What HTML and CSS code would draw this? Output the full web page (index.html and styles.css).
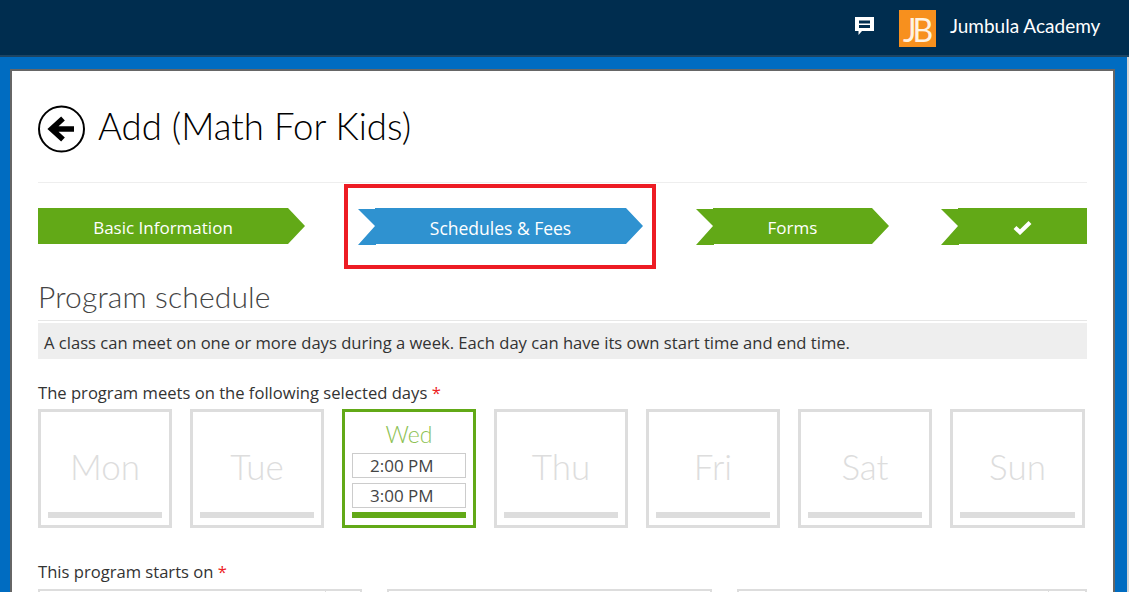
FILE: index.html
```html
<!DOCTYPE html>
<html lang="en">
<head>
<meta charset="utf-8">
<title>Add (Math For Kids)</title>
<link rel="stylesheet" href="styles.css">
</head>
<body>
<header class="topbar">
  <svg class="chat-icon" width="19" height="18" viewBox="0 0 19 18" aria-hidden="true">
    <path fill="#fff" d="M0 0H19V14H7L3.500 18V14H0Z"/>
    <path fill="#002d4f" d="M4 3.500H15V6.500H4ZM4 8H15V11H4Z"/>
  </svg>
  <div class="logo"><span class="logo-text">JB</span></div>
  <span class="org-name">Jumbula Academy</span>
</header>
<div class="stage">
  <main class="card">
    <div class="title-row">
      <svg class="back-icon" width="47" height="48" viewBox="0 0 47 48" aria-hidden="true">
        <circle cx="23.500" cy="24" r="22.500" fill="none" stroke="#000" stroke-width="2"/>
        <path fill="none" stroke="#000" stroke-width="5.500" d="M36 24H14M25 13.500L13.500 24L25 34.500"/>
      </svg>
      <h1 class="page-title">Add (Math For Kids)</h1>
    </div>
    <nav class="steps">
      <div class="step step-first step-1">Basic Information</div>
      <div class="step step-active step-2">Schedules &amp; Fees</div>
      <div class="step step-3">Forms</div>
      <div class="step step-last step-4">
        <svg width="19" height="15" viewBox="0 0 19 15" aria-hidden="true">
          <path fill="none" stroke="#fff" stroke-width="4.200" d="M2 7.500L7 12.200L17 2.500"/>
        </svg>
      </div>
      <div class="highlight"></div>
    </nav>
    <h2 class="section-title">Program schedule</h2>
    <p class="note">A class can meet on one or more days during a week. Each day can have its own start time and end time.</p>
    <label class="field-label first-label">The program meets on the following selected days <span class="req">*</span></label>
    <div class="days">
      <div class="day"><span class="day-name">Mon</span><i class="day-bar"></i></div>
      <div class="day"><span class="day-name">Tue</span><i class="day-bar"></i></div>
      <div class="day day-on">
        <span class="day-name-on">Wed</span>
        <div class="time">2:00 PM</div>
        <div class="time time-end">3:00 PM</div>
        <i class="day-bar"></i>
      </div>
      <div class="day"><span class="day-name">Thu</span><i class="day-bar"></i></div>
      <div class="day"><span class="day-name">Fri</span><i class="day-bar"></i></div>
      <div class="day"><span class="day-name">Sat</span><i class="day-bar"></i></div>
      <div class="day"><span class="day-name">Sun</span><i class="day-bar"></i></div>
    </div>
    <label class="field-label second-label">This program starts on <span class="req">*</span></label>
    <div class="inputs">
      <div class="input input-a"><i class="addon addon-a"></i></div>
      <div class="input input-b"></div>
      <div class="input input-c"><i class="addon addon-c"></i></div>
    </div>
  </main>
  <div class="scrollbar"></div>
</div>
</body>
</html>
```
FILE: styles.css
```css
* { box-sizing: border-box; }
html, body { height: 100%; }
body {
  margin: 0;
  height: 592px;
  overflow: hidden;
  display: flex;
  flex-direction: column;
  background: #006cc1;
  font-family: "Open Sans", "Noto Sans", sans-serif;
  color: #333;
}
.topbar {
  flex: none;
  height: 57px;
  background: #002d4f;
  border-bottom: 2px solid #1d4462;
  display: flex;
  align-items: center;
  padding: 0 0 0 855px;
}
.chat-icon { flex: none; margin-right: 25px; margin-top: -3px; }
.logo {
  flex: none;
  width: 37px;
  height: 37px;
  background: #f7901e;
  display: flex;
  align-items: center;
  justify-content: center;
  margin-top: 1px;
}
.logo-text {
  font-family: Lato, sans-serif;
  font-weight: 400;
  font-size: 32px;
  letter-spacing: -4px;
  color: #fff3e2;
  line-height: 1;
  margin-top: 3px;
  margin-left: -3px;
}
.org-name {
  margin-left: 14px;
  font-family: Lato, sans-serif;
  font-size: 19px;
  font-weight: 400;
  color: #fff;
  white-space: nowrap;
  margin-top: -5px;
}
.stage {
  flex: 1;
  min-height: 0;
  display: flex;
  padding-top: 12px;
  padding-left: 10px;
}
.card {
  width: 1105px;
  background: #fff;
  border: solid #666;
  border-width: 2px 2px 0;
  padding: 34px 26px 0;
  flex: none;
}
.scrollbar {
  flex: none;
  width: 2px;
  margin-left: 12px;
  margin-top: -12px;
  background: #d4d4d4;
}
.title-row {
  display: flex;
  align-items: center;
  height: 78px;
  padding-bottom: 30px;
  border-bottom: 1px solid #eee;
}
.back-icon { flex: none; }
.page-title {
  margin: -6px 0 0 13px;
  font-family: Lato, sans-serif;
  font-weight: 300;
  font-size: 36.600px;
  color: #000;
}
.steps {
  position: relative;
  display: flex;
  gap: 53px;
  margin-top: 25px;
}
.step {
  height: 37px;
  flex: none;
  display: flex;
  align-items: center;
  justify-content: center;
  padding: 2px 17px 0;
  background: #62a917;
  color: #fff;
  font-size: 17px;
  clip-path: polygon(0 1px, 17px 1px, 17px 0, calc(100% - 17px) 0, 100% 18px, calc(100% - 17px) 36px, 18px 36px, 18px 37px, 0 37px, 17px 18px);
}
.step-1 { width: 267px; }
.step-2 { width: 285px; font-size: 17.500px; }
.step-3 { width: 193px; }
.step-4 { width: 146px; margin-left: -1px; }
.step-active { background: #2f92d0; }
.step-first {
  padding-left: 0;
  clip-path: polygon(0 0, calc(100% - 17px) 0, 100% 18px, calc(100% - 17px) 36px, 0 36px);
}
.step-last {
  padding-right: 0;
  clip-path: polygon(0 1px, 17px 1px, 17px 0, 100% 0, 100% 36px, 18px 36px, 18px 37px, 0 37px, 17px 18px);
}
.highlight {
  position: absolute;
  left: 306px;
  top: -24px;
  width: 312px;
  height: 85px;
  border: 4px solid #ed1c24;
  pointer-events: none;
}
.section-title {
  margin: 36px 0 0;
  height: 40px;
  line-height: 30px;
  font-family: Lato, sans-serif;
  font-weight: 300;
  font-size: 30px;
  letter-spacing: 0.15px;
  color: #444;
  border-bottom: 1px solid #e6e6e6;
}
.note {
  margin: 2px 0 0;
  height: 36px;
  line-height: 40px;
  padding-left: 6px;
  background: #eee;
  font-size: 16.600px;
  white-space: nowrap;
}
.field-label { display: block; font-size: 16.600px; line-height: 20px; white-space: nowrap; }
.first-label { margin-top: 24px; }
.second-label { margin-top: 34px; }
.req { color: #ed1c24; }
.days {
  display: grid;
  grid-template-columns: repeat(6, 134px) 135px;
  column-gap: 18px;
  margin-top: 6px;
}
.day {
  height: 119px;
  border: 3px solid #ddd;
  padding: 0 7px 7px;
  display: flex;
  flex-direction: column;
  align-items: center;
}
.day-name {
  flex: 1;
  display: flex;
  align-items: center;
  font-family: Lato, sans-serif;
  font-weight: 300;
  font-size: 35px;
  color: #ddd;
  padding-top: 7px;
}
.day-bar { flex: none; display: block; width: 100%; height: 6px; background: #ddd; }
.day-on { border-color: #62a917; }
.day-on .day-bar { background: #62a917; margin-top: 4px; }
.day-name-on {
  font-family: Lato, sans-serif;
  font-weight: 300;
  font-size: 23px;
  line-height: 26px;
  margin-top: 9px;
  margin-bottom: 6px;
  color: #8cc152;
}
.time {
  flex: none;
  width: 100%;
  height: 25px;
  border: 1px solid #ccc;
  padding-left: 17px;
  line-height: 24px;
  font-size: 17px;
  color: #444;
}
.time-end { margin-top: 5px; }
.inputs {
  display: flex;
  gap: 25px;
  margin-top: 7px;
}
.input {
  flex: none;
  height: 3px;
  border: 2px solid #ddd;
  border-bottom: 0;
  display: flex;
  justify-content: flex-end;
}
.input-a { width: 324px; }
.input-b { width: 325px; }
.input-c { width: 350px; }
.addon { display: block; height: 100%; border-left: 1px solid #ddd; }
.addon-a { width: 35px; }
.addon-c { width: 37px; }
```
